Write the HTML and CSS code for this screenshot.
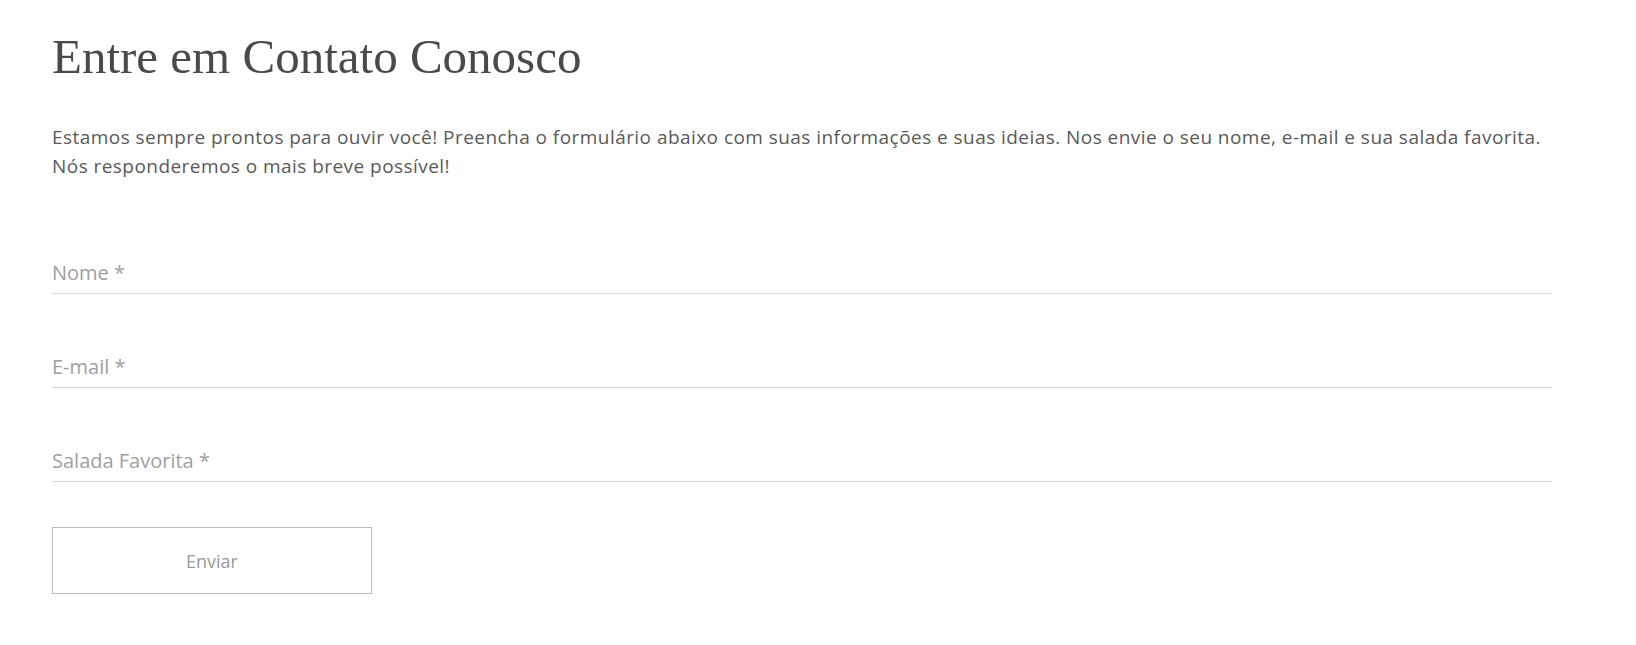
FILE: index.html
```html
<!DOCTYPE html>
<html>
<head>
    <title>Entre em Contato Conosco</title>
    <meta http-equiv="Content-Type" content="text/html; charset=utf-8">
    <link rel="stylesheet" href="styles.css">
</head>
<body>

<div class="contato">
    <h1>Entre em Contato Conosco</h1>
    <p class="intro">Estamos sempre prontos para ouvir você! Preencha o formulário abaixo com suas informações e suas ideias. Nos envie o seu nome, e-mail e sua salada favorita. Nós responderemos o mais breve possível!</p>

    <form class="form-contato" action="#">
        <input type="text" name="nome" placeholder="Nome *">
        <input type="email" name="email" placeholder="E-mail *">
        <input type="text" name="salada" placeholder="Salada Favorita *">
        <button type="submit" class="enviar">Enviar</button>
    </form>
</div>

</body>
</html>
```

FILE: styles.css
```css
body, html {
    margin: 0;
    padding: 0;
    background-color: white;
    font-family: 'Open Sans', 'Noto Sans', Arial, sans-serif;
}

.contato {
    width: 1500px;
    padding: 29px 0 0 52px;
}

h1 {
    margin: 0;
    font-family: 'Liberation Serif', 'DejaVu Serif', serif;
    font-weight: normal;
    font-size: 49px;
    line-height: 55px;
    color: #4a4a4a;
}

.intro {
    margin: 39px 0 0 0;
    font-size: 19px;
    letter-spacing: 0.45px;
    line-height: 29px;
    color: #5a5a5a;
}

.form-contato {
    display: flex;
    flex-direction: column;
    gap: 60px;
    margin-top: 79px;
}

.form-contato input {
    display: block;
    width: 100%;
    box-sizing: border-box;
    margin: 0;
    padding: 0 0 9px 0;
    border: none;
    border-bottom: 1px solid #d6d6d6;
    outline: none;
    font-family: inherit;
    font-size: 20px;
    line-height: 24px;
    height: 34px;
    color: #555;
    background: transparent;
}

.form-contato input::placeholder {
    color: #a0a0a0;
}

.enviar {
    margin-top: -15px;
    width: 320px;
    height: 67px;
    background: white;
    border: 1px solid #bdbdbd;
    font-family: inherit;
    font-size: 18px;
    color: #9a9a9a;
    cursor: pointer;
}
```
